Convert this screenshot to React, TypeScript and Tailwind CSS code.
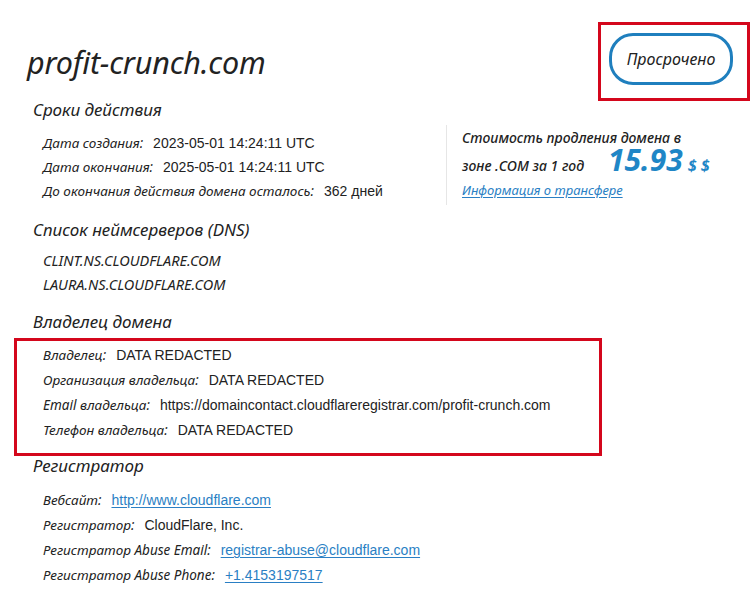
const label = "font-['Noto_Sans',sans-serif] italic text-[13.5px] text-[#222]";
const value = "font-['Liberation_Sans',Arial,sans-serif] text-[14px] text-[#222]";
const link = "font-['Liberation_Sans',Arial,sans-serif] text-[14px] text-[#2a7fc4] underline underline-offset-2";
const heading = "font-['Noto_Sans',sans-serif] italic text-[17px] text-[#222] leading-[24px]";

type Row = { name: string; text: string; href?: boolean };

function Rows({ rows, h }: { rows: Row[]; h: string }) {
  return (
    <div>
      {rows.map((r) => (
        <div key={r.name} className={`flex items-center gap-[10px] ${h}`}>
          <span className={label}>{r.name}:</span>
          <span className={r.href ? link : value}>{r.text}</span>
        </div>
      ))}
    </div>
  );
}

export default function App() {
  return (
    <div className="w-[755px] h-[594px] bg-white overflow-hidden">
      {/* header */}
      <div className="flex items-center justify-between pt-[22px] pr-[5px]">
        <h1 className="ml-[27px] font-['Noto_Sans',sans-serif] italic text-[30.5px] leading-[40px] text-[#222] tracking-[-0.2px]">
          profit-crunch.com
        </h1>
        <div className="border-[3px] border-[#d4071c] w-[152px] h-[79px] pl-[8px] pt-[8px]">
          <div className="w-[124px] h-[52px] rounded-[24px] border-[3px] border-[#1f7fbe] flex items-center justify-center">
            <span className="font-['Noto_Sans',sans-serif] italic text-[16px] text-[#222]">Просрочено</span>
          </div>
        </div>
      </div>

      {/* dates + price */}
      <div className="flex mt-[-3px]">
        <div className="w-[446px] pl-[33px]">
          <div className={heading}>Сроки действия</div>
          <div className="pl-[10px] mt-[9px]">
            <Rows
              h="h-[24px]"
              rows={[
                { name: "Дата создания", text: "2023-05-01 14:24:11 UTC" },
                { name: "Дата окончания", text: "2025-05-01 14:24:11 UTC" },
                { name: "До окончания действия домена осталось", text: "362 дней" },
              ]}
            />
          </div>
        </div>
        <div className="mt-[27px] h-[80px] border-l border-[#e6e6e6] pl-[15px] font-['Noto_Sans',sans-serif] italic font-medium text-[14px] text-[#222]">
          <div className="leading-[20px] mt-[3px]">Стоимость продления домена в</div>
          <div className="flex items-baseline h-[32px]">
            <span>зоне .COM за 1 год</span>
            <span className="ml-[24px] inline-block leading-[24px] text-[30px] font-bold text-[#1f86c6]">15.93</span>
            <span className="ml-[5px] text-[16px] font-bold text-[#1f86c6]">$ $</span>
          </div>
          <div className="font-normal text-[13px] text-[#2a7fc4] underline underline-offset-2 leading-[20px]">
            Информация о трансфере
          </div>
        </div>
      </div>

      {/* name servers */}
      <div className="pl-[33px] mt-[13px]">
        <div className={heading}>Список неймсерверов (DNS)</div>
        <div className="pl-[10px] mt-[7px]">
          {["CLINT.NS.CLOUDFLARE.COM", "LAURA.NS.CLOUDFLARE.COM"].map((ns) => (
            <div key={ns} className="font-['Noto_Sans',sans-serif] italic text-[14.5px] text-[#222] h-[24px] flex items-center">
              {ns}
            </div>
          ))}
        </div>
      </div>

      {/* owner */}
      <div className="mt-[13px]">
        <div className={`${heading} pl-[33px]`}>Владелец домена</div>
        <div className="ml-[14px] mt-[4px] w-[588px] border-[3px] border-[#d4071c] pl-[26px] pt-[2px] pb-[10px]">
          <Rows
            h="h-[25px]"
            rows={[
              { name: "Владелец", text: "DATA REDACTED" },
              { name: "Организация владельца", text: "DATA REDACTED" },
              { name: "Email владельца", text: "https://domaincontact.cloudflareregistrar.com/profit-crunch.com" },
              { name: "Телефон владельца", text: "DATA REDACTED" },
            ]}
          />
        </div>
      </div>

      {/* registrar */}
      <div className="pl-[33px]">
        <div className={`${heading} leading-[16px] mt-[-2px]`}>Регистратор</div>
        <div className="pl-[10px] mt-[10px]">
          <Rows
            h="h-[25px]"
            rows={[
              { name: "Вебсайт", text: "http://www.cloudflare.com", href: true },
              { name: "Регистратор", text: "CloudFlare, Inc." },
              { name: "Регистратор Abuse Email", text: "registrar-abuse@cloudflare.com", href: true },
              { name: "Регистратор Abuse Phone", text: "+1.4153197517", href: true },
            ]}
          />
        </div>
      </div>
    </div>
  );
}
